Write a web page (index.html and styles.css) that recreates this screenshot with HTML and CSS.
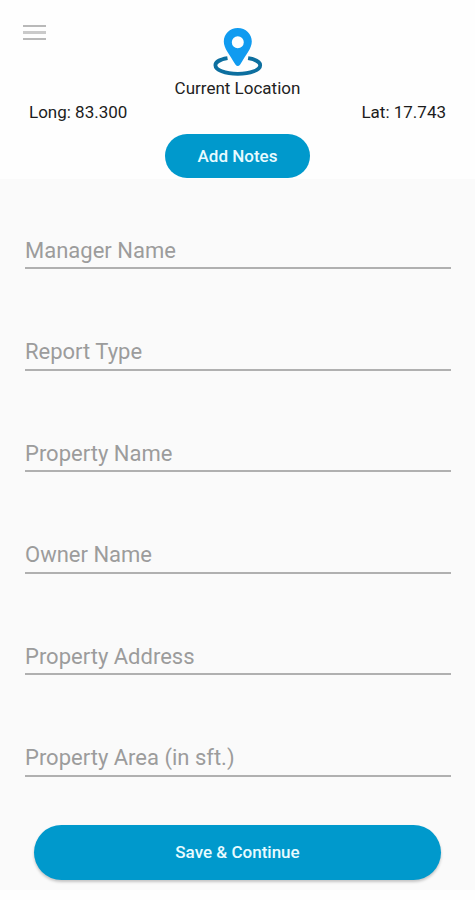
FILE: index.html
```
<!DOCTYPE html>
<html lang="en">
<head>
    <meta charset="UTF-8">
    <meta name="viewport" content="width=device-width, initial-scale=1.0">
    <title>Property Report</title>
    <link rel="stylesheet" href="styles.css">
</head>
<body>
    <header class="header">
        <button class="menu-button" aria-label="Menu">
            <span></span>
            <span></span>
            <span></span>
        </button>
        <div class="location">
            <svg class="location-icon" width="50" height="49" viewBox="0 0 50 49">
                <path d="M14.5 30.2C7 31.4 2.4 34.2 2.4 37.3C2.4 42 12 45.8 24.8 45.8S47.2 42 47.2 37.3C47.2 34.2 42.6 31.4 35.1 30.2" fill="none" stroke="#0d6f9f" stroke-width="3.8"/>
                <path fill-rule="evenodd" d="M24.8 0C16.8 0 10.8 6 10.8 13.6C10.8 20.5 16.5 26.5 22.4 36.6Q24.8 39.6 27.2 36.6C33.1 26.5 38.8 20.5 38.8 13.6C38.8 6 32.8 0 24.8 0ZM24.8 8.2A6 6 0 1 1 24.8 20.2A6 6 0 1 1 24.8 8.2Z" fill="#109bf0"/>
            </svg>
            <div class="location-label">Current Location</div>
        </div>
        <div class="coords">
            <span>Long: 83.300</span>
            <span>Lat: 17.743</span>
        </div>
        <button class="notes-button">Add Notes</button>
    </header>

    <form class="form">
        <input type="text" placeholder="Manager Name">
        <input type="text" placeholder="Report Type">
        <input type="text" placeholder="Property Name">
        <input type="text" placeholder="Owner Name">
        <input type="text" placeholder="Property Address">
        <input type="text" placeholder="Property Area (in sft.)">
        <button type="button" class="save-button">Save &amp; Continue</button>
    </form>
</body>
</html>
```
FILE: styles.css
```
* {
    box-sizing: border-box;
}
body {
    font-family: Roboto, sans-serif;
    background-color: #fefefe;
    margin: 0;
    padding: 0;
}
button {
    font-family: inherit;
    border: none;
    padding: 0;
    cursor: pointer;
}
.header {
    position: relative;
    height: 179px;
    padding-top: 28px;
}
.menu-button {
    position: absolute;
    top: 25px;
    left: 23px;
    width: 23px;
    background: none;
    display: flex;
    flex-direction: column;
    gap: 4px;
}
.menu-button span {
    width: 100%;
    height: 2px;
    background-color: #b9b9b9;
}
.menu-button span:nth-child(2) {
    height: 3px;
    background-color: #cacaca;
}
.location {
    display: flex;
    flex-direction: column;
    align-items: center;
}
.location-icon {
    display: block;
}
.location-label {
    font-size: 17px;
    line-height: 20px;
    margin-top: 1px;
    color: #222;
}
.coords {
    display: flex;
    justify-content: space-between;
    padding: 0 29px;
    margin-top: 4px;
    font-size: 17px;
    line-height: 20px;
    color: #1c1c1c;
}
.notes-button {
    display: block;
    width: 145px;
    height: 44px;
    margin: 12px auto 0;
    border-radius: 22px;
    background-color: #0099cc;
    color: #e8fbff;
    font-size: 17px;
    font-weight: 500;
}
.form {
    height: 711px;
    padding: 54.4px 24px 0 25px;
    background-color: #fafafa;
}
.form input {
    display: block;
    width: 100%;
    height: 36px;
    margin-bottom: 65.5px;
    padding: 0;
    border: none;
    border-bottom: 2px solid #b0b0b0;
    background: none;
    font-family: inherit;
    font-size: 22px;
    outline: none;
}
.form input:last-of-type {
    margin-bottom: 48px;
}
.form input::placeholder {
    color: #9c9c9c;
    opacity: 1;
}
.save-button {
    display: block;
    width: 407px;
    height: 55px;
    margin: 0 0 0 9px;
    border-radius: 28px;
    background-color: #0099cc;
    color: #e8fbff;
    font-size: 17px;
    font-weight: 500;
    box-shadow: 0 2px 3px rgba(0, 0, 0, 0.22);
}
```
